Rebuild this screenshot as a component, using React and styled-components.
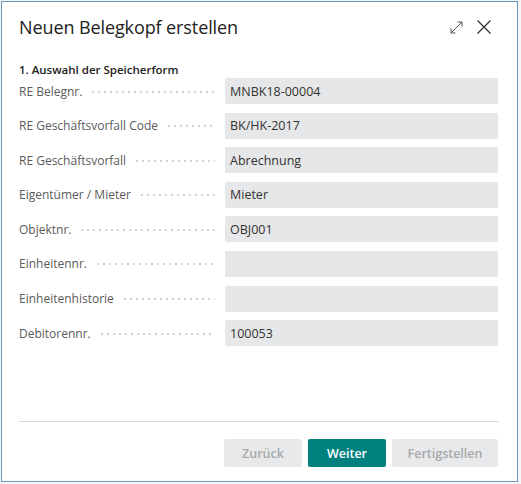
import React from "react";
import styled, { createGlobalStyle } from "styled-components";

const GlobalStyle = createGlobalStyle`
  html, body {
    margin: 0;
    padding: 0;
    background: #f4f6f8;
  }
  body {
    font-family: "Open Sans", "Noto Sans", sans-serif;
  }
`;

const fields = [
  { label: "RE Belegnr.", value: "MNBK18-00004" },
  { label: "RE Geschäftsvorfall Code", value: "BK/HK-2017" },
  { label: "RE Geschäftsvorfall", value: "Abrechnung" },
  { label: "Eigentümer / Mieter", value: "Mieter" },
  { label: "Objektnr.", value: "OBJ001" },
  { label: "Einheitennr.", value: "" },
  { label: "Einheitenhistorie", value: "" },
  { label: "Debitorennr.", value: "100053" },
];

const App = () => {
  return (
    <>
      <GlobalStyle />
      <Dialog>
        <Header>
          <Title>Neuen Belegkopf erstellen</Title>
          <HeaderIcons>
            <IconButton aria-label="Maximieren">
              <svg width="15" height="15" viewBox="0 0 15 15" fill="none" stroke="#555" strokeWidth="1">
                <path d="M2 13L13 2M8.5 2H13V6.5M2 8.5V13H6.5" />
              </svg>
            </IconButton>
            <IconButton aria-label="Schließen">
              <svg width="16" height="16" viewBox="0 0 16 16" fill="none" stroke="#333" strokeWidth="1.3">
                <path d="M1.5 1.5l13 13M14.5 1.5l-13 13" />
              </svg>
            </IconButton>
          </HeaderIcons>
        </Header>
        <Body>
          <Section>1. Auswahl der Speicherform</Section>
          <FieldList>
            {fields.map((f) => (
              <Row key={f.label}>
                <Label>
                  <LabelText>{f.label}</LabelText>
                  <Leader />
                </Label>
                <Field>{f.value}</Field>
              </Row>
            ))}
          </FieldList>
        </Body>
        <Footer>
          <Button disabled>Zurück</Button>
          <Button primary>Weiter</Button>
          <Button disabled wide>Fertigstellen</Button>
        </Footer>
      </Dialog>
    </>
  );
};

export default App;

const Dialog = styled.div`
  box-sizing: border-box;
  width: 517px;
  height: 481px;
  margin: 1px 0 0 1px;
  border: 1px solid #6a97c0;
  background: #fff;
  display: flex;
  flex-direction: column;
  padding: 0 18px 0 17px;
`;

const Header = styled.div`
  display: flex;
  align-items: center;
  justify-content: space-between;
  height: 50px;
`;

const Title = styled.h1`
  margin: 0;
  font-size: 18px;
  font-weight: 400;
  color: #222;
  letter-spacing: -0.1px;
`;

const HeaderIcons = styled.div`
  display: flex;
  align-items: center;
  gap: 12px;
  margin-right: 7px;
`;

const IconButton = styled.span`
  display: flex;
  align-items: center;
  justify-content: center;
  width: 16px;
  height: 16px;
`;

const Body = styled.div`
  flex: 1;
  display: flex;
  flex-direction: column;
  padding-top: 10px;
`;

const Section = styled.div`
  font-size: 11.5px;
  font-weight: 600;
  color: #222;
  line-height: 16px;
`;

const FieldList = styled.div`
  display: flex;
  flex-direction: column;
  gap: 8.6px;
`;

const Row = styled.div`
  display: flex;
  align-items: center;
  height: 26px;
`;

const Label = styled.div`
  box-sizing: border-box;
  width: 206px;
  display: flex;
  align-items: baseline;
  font-size: 12px;
  color: #5a5a5a;
  padding-right: 10px;
  overflow: hidden;
`;

const LabelText = styled.span`
  white-space: nowrap;
  flex-shrink: 0;
  padding-right: 8px;
`;

const Leader = styled.span`
  flex: 1;
  height: 2px;
  background-image: radial-gradient(circle, #cfcfcf 0.7px, transparent 0.9px);
  background-size: 6px 2px;
  background-repeat: repeat-x;
  transform: translateY(-3px);
`;

const Field = styled.div`
  width: 273px;
  height: 26px;
  box-sizing: border-box;
  background: #e6e7e8;
  padding: 0 5px;
  display: flex;
  align-items: center;
  font-size: 12.5px;
  color: #333;
`;

const Footer = styled.div`
  border-top: 1px solid #d8d8d8;
  display: flex;
  justify-content: flex-end;
  gap: 6px;
  padding: 17px 1px 14px 0;
`;

const Button = styled.button`
  height: 28px;
  min-width: ${(p) => (p.wide ? "106px" : "78px")};
  border: none;
  border-radius: 2px;
  font-family: inherit;
  font-size: 12.5px;
  font-weight: 600;
  padding: 0 12px;
  background: ${(p) => (p.primary ? "#00807f" : "#e8e9ea")};
  color: ${(p) => (p.primary ? "#fff" : "#a7a9ab")};
`;
